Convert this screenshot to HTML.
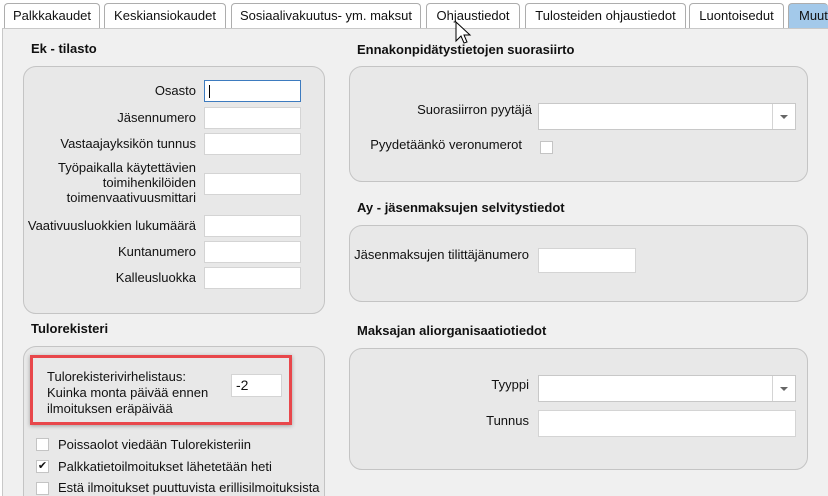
<!DOCTYPE html>
<html><head><meta charset="utf-8"><style>
*{box-sizing:border-box;margin:0;padding:0}
html,body{width:828px;height:496px;overflow:hidden}
body{background:#fff;font-family:"Liberation Sans",Arial,sans-serif;font-size:13px;line-height:15px;color:#111;position:relative}
.a{position:absolute}
.tab{position:absolute;top:3px;height:26px;border:1px solid #adadad;border-bottom:none;border-radius:4px 4px 0 0;background:#fff;text-align:center;line-height:24px;font-size:13px}
.content{position:absolute;left:2px;top:28px;width:826px;height:468px;background:#f0f0f0;border-left:1px solid #c8c8c8;border-top:1px solid #c8c8c8;overflow:hidden}
.box{position:absolute;background:#e8e8e8;border:1px solid #c4c4c4;border-radius:13px}
.t{position:absolute;font-weight:bold;font-size:13px}
.in{position:absolute;background:#fff;border:1px solid #d4d4d4;height:22px}
.lb{position:absolute;text-align:right;line-height:16px}
.cb{position:absolute;width:13px;height:13px;background:#fff;border:1px solid #c4c4c4}
.sel{position:absolute;background:#fff;border:1px solid #c8c8c8}
.sel:after{content:"";position:absolute;right:0;top:0;bottom:0;width:22px;border-left:1px solid #d4d4d4}
.arr{position:absolute;width:0;height:0;border-left:4px solid transparent;border-right:4px solid transparent;border-top:4px solid #666;z-index:2}
</style></head><body>
<div class="tab" style="left:4px;width:96px">Palkkakaudet</div>
<div class="tab" style="left:104px;width:122px">Keskiansiokaudet</div>
<div class="tab" style="left:231px;width:190px">Sosiaalivakuutus- ym. maksut</div>
<div class="tab" style="left:426px;width:94px">Ohjaustiedot</div>
<div class="tab" style="left:525px;width:161px">Tulosteiden ohjaustiedot</div>
<div class="tab" style="left:689px;width:95px">Luontoisedut</div>
<div class="tab" style="left:788px;width:40px;background:#a3c9ea;text-align:left;padding-left:10px;overflow:hidden;white-space:nowrap;border-right:none">Muut</div>
<div class="content">
<div class="box" style="left:20px;top:37px;width:302px;height:248px"></div>
<div class="box" style="left:20px;top:317px;width:302px;height:151px;border-bottom:none;border-radius:13px 13px 0 0"></div>
<div class="box" style="left:346px;top:37px;width:459px;height:116px"></div>
<div class="box" style="left:346px;top:196px;width:459px;height:77px"></div>
<div class="box" style="left:346px;top:319px;width:459px;height:122px"></div>
</div>

<div class="t" style="left:31px;top:41px">Ek - tilasto</div>
<div class="lb" style="left:20px;width:176px;top:83px">Osasto</div>
<div class="in" style="left:204px;top:80px;width:97px;border:1px solid #3d7bbf"><div class="a" style="left:4px;top:4px;width:1px;height:13px;background:#000"></div></div>
<div class="lb" style="left:20px;width:176px;top:110px">Jäsennumero</div>
<div class="in" style="left:204px;top:107px;width:97px"></div>
<div class="lb" style="left:20px;width:176px;top:136px">Vastaajayksikön tunnus</div>
<div class="in" style="left:204px;top:133px;width:97px"></div>
<div class="lb" style="left:20px;width:176px;top:160px;line-height:15px">Työpaikalla käytettävien<br>toimihenkilöiden<br>toimenvaativuusmittari</div>
<div class="in" style="left:204px;top:173px;width:97px"></div>
<div class="lb" style="left:20px;width:176px;top:218px">Vaativuusluokkien lukumäärä</div>
<div class="in" style="left:204px;top:215px;width:97px"></div>
<div class="lb" style="left:20px;width:176px;top:244px">Kuntanumero</div>
<div class="in" style="left:204px;top:241px;width:97px"></div>
<div class="lb" style="left:20px;width:176px;top:270px">Kalleusluokka</div>
<div class="in" style="left:204px;top:267px;width:97px"></div>

<div class="t" style="left:31px;top:321px">Tulorekisteri</div>
<div class="a" style="left:30px;top:355px;width:262px;height:70px;border:3px solid #e8474b;box-shadow:0 1px 4px rgba(0,0,0,.3)"></div>
<div class="a" style="left:47px;top:369px;line-height:16px">Tulorekisterivirhelistaus:<br>Kuinka monta päivää ennen<br>ilmoituksen eräpäivää</div>
<div class="in" style="left:231px;top:374px;width:51px;height:23px;padding:3px 4px;font-size:14px">-2</div>
<div class="cb" style="left:36px;top:438px"></div><div class="a" style="left:58px;top:437px">Poissaolot viedään Tulorekisteriin</div>
<div class="cb" style="left:36px;top:460px;font-size:11px;line-height:10px;text-align:center">✔</div><div class="a" style="left:58px;top:459px">Palkkatietoilmoitukset lähetetään heti</div>
<div class="cb" style="left:36px;top:482px"></div><div class="a" style="left:58px;top:480px">Estä ilmoitukset puuttuvista erillisilmoituksista</div>

<div class="t" style="left:357px;top:42px">Ennakonpidätystietojen suorasiirto</div>
<div class="lb" style="left:340px;width:192px;top:102px">Suorasiirron pyytäjä</div>
<div class="sel" style="left:538px;top:103px;width:258px;height:27px"></div><div class="arr" style="left:780px;top:115px"></div>
<div class="lb" style="left:340px;width:182px;top:137px">Pyydetäänkö veronumerot</div>
<div class="cb" style="left:540px;top:141px"></div>

<div class="t" style="left:357px;top:200px">Ay - jäsenmaksujen selvitystiedot</div>
<div class="lb" style="left:340px;width:189px;top:247px">Jäsenmaksujen tilittäjänumero</div>
<div class="in" style="left:538px;top:248px;width:98px;height:25px"></div>

<div class="t" style="left:357px;top:323px">Maksajan aliorganisaatiotiedot</div>
<div class="lb" style="left:340px;width:189px;top:377px">Tyyppi</div>
<div class="sel" style="left:538px;top:375px;width:258px;height:27px"></div><div class="arr" style="left:780px;top:387px"></div>
<div class="lb" style="left:340px;width:189px;top:413px">Tunnus</div>
<div class="in" style="left:538px;top:410px;width:258px;height:27px"></div>

<svg class="a" style="left:455px;top:21px" width="20" height="28" viewBox="0 0 20 28"><path d="M1 1 L1 20 L6 15 L9 22 L12 21 L9 14 L15 14 Z" fill="#fff" stroke="#000" stroke-width="1"/></svg>
</body></html>
